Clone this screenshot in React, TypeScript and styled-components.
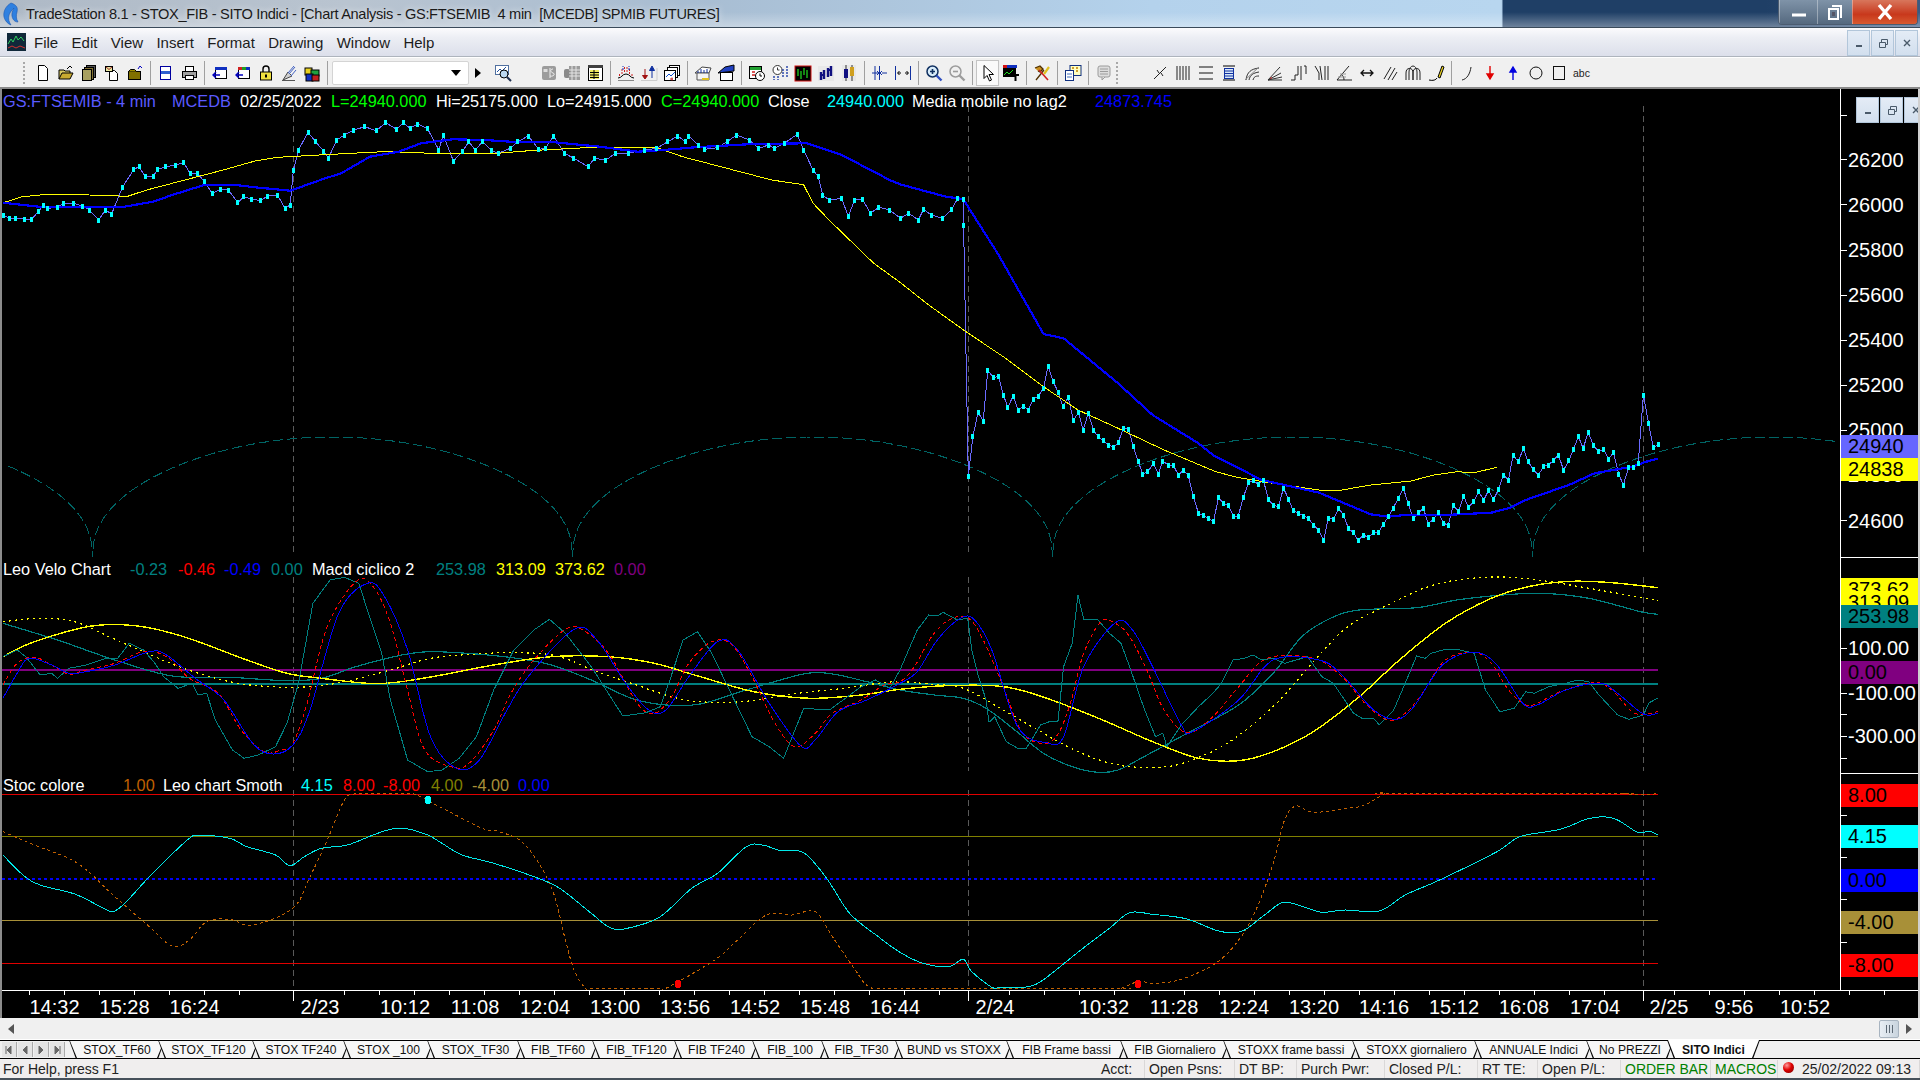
import React from 'react';
import styled, { createGlobalStyle } from 'styled-components';

type Pt = [number, number];

const GlobalStyle = createGlobalStyle`
  html, body {
    margin: 0;
    padding: 0;
    overflow: hidden;
    background: #000;
    font-family: 'Liberation Sans', Arial, sans-serif;
  }
  * { box-sizing: border-box; }
`;

/* ---- traced chart data, page coordinates ---- */

const left = (p: Pt[], base: number): Pt[] => p.map(([x, y]) => [x / 1.742, base + y / 3]);
const right = (p: Pt[], base: number): Pt[] => p.map(([x, y]) => [900 + x / 1.742, base + y / 3]);
const mainLeft = (p: Pt[]): Pt[] => p.map(([x, y]) => [x / 1.568, 100 + y / 3]);
const join = (a: Pt[], b: Pt[]): Pt[] => [...a.filter(([x]) => x < b[0][0]), ...b];

const poly = (p: Pt[]) => p.map(([x, y]) => `${x.toFixed(1)},${y.toFixed(1)}`).join(' ');

// catmull-rom, for the averaged lines
const smooth = (p: Pt[]) => {
  let d = `M${p[0][0].toFixed(1)} ${p[0][1].toFixed(1)}`;
  for (let i = 0; i < p.length - 1; i++) {
    const a = p[Math.max(i - 1, 0)];
    const b = p[i];
    const c = p[i + 1];
    const e = p[Math.min(i + 2, p.length - 1)];
    const c1x = b[0] + (c[0] - a[0]) / 6;
    const c1y = b[1] + (c[1] - a[1]) / 6;
    const c2x = c[0] - (e[0] - b[0]) / 6;
    const c2y = c[1] - (e[1] - b[1]) / 6;
    d += `C${c1x.toFixed(1)} ${c1y.toFixed(1)} ${c2x.toFixed(1)} ${c2y.toFixed(1)} ${c[0].toFixed(1)} ${c[1].toFixed(1)}`;
  }
  return d;
};

const mainYellow = join(
  mainLeft([[5,308],[35,290],[75,283],[140,285],[200,289],[230,270],[290,240],[350,210],[400,183],[435,172],[500,165],[600,155],[680,160],[780,160],[830,152],[930,142],[1030,143],[1070,170],[1150,210],[1210,240],[1260,254],[1275,310],[1300,360],[1370,490],[1440,590]]),
  right([[0,547],[50,615],[115,695],[180,770],[250,860],[310,930],[380,985],[460,1050],[550,1115],[590,1133],[650,1150],[730,1170],[770,1170],[820,1155],[890,1143],[930,1125],[970,1115],[1000,1118],[1040,1102]], 100),
);

const mainBlue = join(
  mainLeft([[5,308],[60,320],[120,322],[195,320],[240,305],[270,285],[320,255],[370,255],[400,262],[455,272],[510,235],[535,220],[580,170],[625,155],[660,130],[710,118],[760,120],[800,125],[870,127],[940,140],[1000,155],[1040,150],[1090,142],[1180,132],[1265,130],[1320,165],[1395,240],[1440,268]]),
  right([[0,253],[80,290],[110,297],[170,460],[250,702],[285,715],[380,850],[440,945],[520,1030],[545,1065],[630,1140],[730,1178],[820,1243],[850,1250],[885,1244],[960,1244],[1030,1238],[1060,1225],[1090,1200],[1165,1155],[1210,1120],[1275,1100],[1300,1085],[1320,1076]], 100),
);

const closes = join(
  mainLeft([[5,345],[15,355],[25,356],[38,357],[50,357],[60,335],[68,315],[75,325],[90,322],[100,310],[115,310],[130,318],[140,330],[155,360],[165,330],[175,342],[192,262],[210,208],[218,200],[228,230],[240,230],[247,208],[260,200],[275,195],[288,188],[298,220],[310,220],[320,245],[333,280],[345,268],[358,270],[373,308],[382,290],[395,297],[408,302],[420,288],[435,285],[447,325],[455,315],[460,210],[468,150],[483,97],[495,125],[508,155],[515,175],[528,120],[540,105],[555,90],[572,80],[590,92],[605,68],[622,88],[632,68],[643,85],[655,72],[670,85],[688,150],[695,105],[711,183],[725,155],[735,125],[745,150],[757,125],[770,150],[781,160],[800,145],[812,125],[828,108],[845,148],[855,145],[868,108],[885,160],[900,175],[922,200],[932,175],[950,180],[965,160],[985,160],[1010,150],[1030,145],[1047,125],[1063,108],[1075,125],[1080,108],[1095,135],[1105,148],[1125,143],[1140,125],[1155,105],[1175,120],[1190,145],[1205,135],[1215,145],[1230,130],[1250,103],[1260,150],[1275,210],[1283,230],[1290,285],[1300,300],[1320,295],[1330,350],[1340,300],[1352,297],[1365,340],[1378,322],[1395,330],[1412,355],[1425,340],[1440,360],[1448,328],[1460,345],[1478,355],[1492,328],[1502,295],[1510,297],[1511,375]]),
  right([[119,1128],[127,1010],[136,937],[145,963],[153,812],[163,832],[172,830],[180,885],[188,922],[197,888],[206,932],[215,918],[223,930],[232,898],[241,888],[250,865],[258,798],[267,845],[276,878],[284,920],[293,892],[302,960],[311,938],[319,990],[328,940],[337,990],[345,1010],[354,1022],[363,1035],[372,1042],[380,1028],[389,985],[398,988],[406,1038],[415,1085],[423,1122],[432,1115],[441,1090],[450,1122],[458,1083],[467,1095],[476,1095],[485,1125],[493,1112],[502,1125],[511,1190],[520,1240],[528,1245],[537,1255],[546,1265],[555,1192],[563,1210],[572,1215],[581,1250],[589,1250],[598,1192],[607,1148],[615,1142],[624,1152],[633,1142],[642,1198],[650,1215],[659,1220],[668,1165],[677,1197],[685,1232],[694,1240],[703,1248],[712,1255],[720,1275],[729,1290],[738,1320],[746,1255],[755,1258],[764,1225],[773,1245],[781,1285],[790,1298],[798,1322],[807,1305],[816,1312],[825,1298],[833,1298],[842,1272],[851,1250],[859,1225],[868,1195],[877,1165],[885,1210],[894,1255],[903,1238],[912,1225],[920,1272],[929,1258],[938,1238],[947,1270],[955,1275],[964,1215],[973,1235],[982,1188],[990,1222],[999,1205],[1008,1175],[1017,1200],[1025,1172],[1034,1198],[1043,1168],[1051,1125],[1060,1140],[1068,1065],[1077,1085],[1086,1045],[1094,1085],[1103,1108],[1112,1125],[1121,1100],[1129,1095],[1138,1082],[1147,1065],[1156,1110],[1165,1082],[1173,1048],[1182,1010],[1190,1045],[1199,997],[1208,1037],[1217,1055],[1226,1047],[1234,1078],[1243,1057],[1252,1122],[1260,1155],[1269,1103],[1278,1103],[1286,1090],[1295,885],[1304,970],[1312,1043],[1321,1033]], 100),
);

// the dashed arches, cusps every 480px
const arches: Pt[] = [];
for (let x = 8.5; x <= 1838; x += 1) {
  const s = Math.abs(Math.sin((Math.PI * (x - 92.5)) / 480));
  arches.push([x, 557 - 120 * Math.pow(s, 0.43)]);
}

const veloFast = join(
  left([[5,320],[30,300],[45,320],[70,375],[90,370],[100,385],[120,355],[150,345],[185,325],[205,325],[225,280],[250,300],[270,340],[285,380],[310,415],[335,400],[345,435],[360,430],[375,510],[405,600],[425,625],[450,615],[480,590],[500,520],[520,400],[545,160],[575,90],[600,82],[625,100],[640,180],[665,310],[680,450],[710,630],[745,665],[770,660],[800,625],[830,560],[860,420],[895,300],[930,240],[957,208],[985,250],[1030,350],[1085,498],[1125,488],[1150,470],[1165,400],[1190,270],[1215,245],[1240,310],[1265,400],[1310,560],[1340,590],[1365,625],[1400,475],[1445,480],[1500,410],[1525,390],[1550,415]], 550),
  right([[0,360],[30,240],[50,195],[65,198],[75,187],[100,210],[118,205],[125,300],[135,370],[150,450],[155,517],[165,500],[185,575],[190,580],[205,595],[220,595],[245,525],[260,515],[275,515],[285,350],[300,280],[310,135],[320,208],[345,210],[365,250],[385,280],[400,350],[425,475],[445,560],[458,550],[465,590],[490,525],[520,470],[545,430],[560,400],[580,330],[600,325],[615,315],[630,330],[650,325],[670,340],[710,320],[735,380],[755,400],[790,490],[805,505],[825,505],[835,525],[860,480],[880,400],[900,318],[915,325],[925,310],[950,298],[970,298],[1000,310],[1020,420],[1045,485],[1070,475],[1090,425],[1105,430],[1130,410],[1160,400],[1180,390],[1200,395],[1215,430],[1250,495],[1270,508],[1295,495],[1305,458],[1320,445]], 550),
);

const veloRed = join(
  left([[5,405],[30,340],[60,322],[90,345],[120,372],[150,360],[200,340],[250,305],[290,320],[330,385],[380,430],[420,540],[460,605],[490,600],[510,580],[535,460],[570,230],[620,95],[650,110],[680,220],[710,420],[740,600],[790,652],[820,635],[860,540],[890,430],[930,330],[985,238],[1015,240],[1060,310],[1110,460],[1140,490],[1170,440],[1200,340],[1240,275],[1275,285],[1310,380],[1350,520],[1385,590],[1420,550],[1450,490],[1500,450],[1540,405]], 550),
  right([[0,395],[25,350],[55,260],[85,210],[118,203],[145,270],[180,410],[210,540],[240,578],[270,565],[295,470],[320,310],[350,215],[375,220],[400,260],[430,360],[460,480],[500,548],[545,500],[590,410],[640,325],[720,325],[770,380],[810,460],[850,510],[880,490],[910,430],[950,330],[1000,307],[1030,340],[1060,420],[1090,465],[1110,460],[1150,425],[1210,398],[1240,420],[1280,490],[1320,485]], 550),
);

const veloBlue = join(
  left([[5,445],[30,370],[50,325],[90,345],[120,370],[150,365],[200,345],[260,305],[290,315],[340,385],[390,450],[440,580],[475,612],[510,585],[540,480],[590,190],[640,100],[670,140],[710,300],[750,560],[795,655],[835,630],[880,490],[920,380],[1000,238],[1040,270],[1090,400],[1130,480],[1160,480],[1200,380],[1250,275],[1285,300],[1340,460],[1395,588],[1420,570],[1460,485],[1510,450]], 550),
  right([[0,400],[30,365],[65,270],[105,205],[130,210],[160,300],[205,530],[255,578],[285,560],[320,350],[375,218],[405,240],[440,350],[490,525],[510,545],[590,450],[650,330],[730,330],[770,375],[825,480],[865,508],[895,470],[945,345],[1000,307],[1040,345],[1085,460],[1110,465],[1160,420],[1220,400],[1250,430],[1295,492],[1320,490]], 550),
);

const macdTeal = join(
  left([[5,220],[100,270],[200,330],[300,378],[400,382],[500,392],[560,385],[620,350],[700,315],[750,305],[830,312],[900,325],[960,345],[1030,390],[1100,445],[1160,465],[1220,462],[1300,420],[1400,372],[1450,372],[1510,395]], 550),
  right([[0,420],[60,435],[110,445],[150,475],[200,540],[250,610],[300,650],[345,667],[380,660],[420,625],[500,550],[590,465],[650,370],[700,260],[750,205],[800,180],[900,173],[970,150],[1050,135],[1120,130],[1200,145],[1290,185],[1320,193]], 550),
);

const macdYellow = join(
  left([[5,320],[60,275],[160,228],[240,228],[320,260],[430,330],[500,370],[560,385],[640,400],[690,397],[760,378],[860,345],[960,320],[1060,320],[1140,340],[1210,375],[1300,420],[1360,438],[1420,445],[1500,435]], 550),
  right([[0,418],[80,407],[170,408],[220,425],[280,460],[360,515],[440,575],[520,625],[590,632],[650,605],[720,545],[800,440],[870,330],[950,220],[1030,145],[1100,108],[1170,94],[1240,98],[1320,113]], 550),
);

const macdDotted = join(
  left([[5,215],[70,205],[130,215],[190,260],[250,305],[320,355],[400,395],[470,410],[540,410],[600,395],[680,360],[750,325],[830,312],[900,308],[970,318],[1040,365],[1100,400],[1180,445],[1240,457],[1310,452],[1390,430],[1470,415],[1530,400]], 550),
  right([[0,395],[50,402],[110,415],[170,470],[240,540],[310,605],[380,645],[450,652],[500,635],[570,580],[650,470],[720,335],[780,230],[850,165],[920,110],[980,88],[1050,81],[1120,92],[1190,112],[1250,130],[1320,152]], 550),
);

const smothCyan = join(
  left([[5,255],[40,315],[70,345],[130,372],[175,410],[197,425],[220,395],[260,320],[295,260],[330,205],[345,196],[400,205],[430,230],[480,255],[505,287],[530,260],[560,235],[605,225],[650,195],[680,178],[705,175],[745,195],[770,220],[805,255],[860,280],[930,320],[975,355],[1030,430],[1065,475],[1100,472],[1150,440],[1205,355],[1250,310],[1300,230],[1330,226],[1360,242],[1400,248],[1440,325],[1480,430],[1530,500]], 770),
  right([[0,547],[40,580],[85,590],[110,568],[125,605],[160,652],[175,652],[200,652],[215,652],[245,635],[315,540],[365,475],[400,428],[440,433],[500,447],[555,483],[595,484],[635,435],[668,397],[705,412],[735,427],[775,420],[835,423],[880,375],[940,330],[1040,245],[1080,200],[1150,178],[1195,148],[1225,140],[1250,150],[1285,187],[1305,184],[1320,194]], 770),
);

const stocOrange = join(
  left([[5,185],[60,225],[135,280],[200,380],[260,470],[300,528],[330,510],[360,455],[400,448],[440,465],[510,415],[540,320],[570,210],[600,90],[620,71],[635,71],[705,71],[720,71],[760,105],[840,175],[870,185],[915,225],[960,350],[985,510],[1000,600],[1020,655],[1035,655],[1145,655],[1160,655],[1245,570],[1285,510],[1335,435],[1380,435],[1420,425],[1450,500],[1490,600],[1515,650]], 770),
  right([[0,655],[370,655],[385,655],[415,635],[445,640],[490,628],[550,580],[590,510],[620,420],[650,280],[670,150],[690,108],[720,127],[780,115],[810,105],[845,71],[860,71],[1245,71],[1260,71],[1290,75],[1320,71]], 770),
);

const dayLines = [293, 968, 1643];

const timeLabels: [string, number][] = [
  ['14:32', 54.5], ['15:28', 124.6], ['16:24', 194.6], ['2/23', 320], ['10:12', 405], ['11:08', 475],
  ['12:04', 545], ['13:00', 615], ['13:56', 685], ['14:52', 755], ['15:48', 825], ['16:44', 895],
  ['2/24', 995], ['10:32', 1104], ['11:28', 1174], ['12:24', 1244], ['13:20', 1314], ['14:16', 1384],
  ['15:12', 1454], ['16:08', 1524], ['17:04', 1595], ['2/25', 1669], ['9:56', 1734], ['10:52', 1805],
];

const timeTicks: number[] = [];
for (let x = 28.7; x < 1920; x += 35) {
  if (!dayLines.some((d) => Math.abs(d - x) < 20)) timeTicks.push(x);
}

type AxisLabel = { text: string; y: number; bg?: string };

const mainAxis: AxisLabel[] = [
  { text: '26200', y: 160 }, { text: '26000', y: 205 }, { text: '25800', y: 250.5 }, { text: '25600', y: 295.5 },
  { text: '25400', y: 340.5 }, { text: '25200', y: 385.5 }, { text: '25000', y: 430.5 }, { text: '24800', y: 475.5 },
  { text: '24600', y: 521 }, { text: '24940', y: 446.5, bg: '#6666ff' }, { text: '24838', y: 469.5, bg: '#ffff00' },
];
const veloAxis: AxisLabel[] = [
  { text: '100.00', y: 648.5 }, { text: '-100.00', y: 693.5 }, { text: '-300.00', y: 736.5 },
  { text: '373.62', y: 589.5, bg: '#ffff00' }, { text: '313.09', y: 602, bg: '#ffff00' },
  { text: '253.98', y: 616.5, bg: '#008080' }, { text: '0.00', y: 672.5, bg: '#800080' },
];
const stocAxis: AxisLabel[] = [
  { text: '8.00', y: 795.5, bg: '#ff0000' }, { text: '4.15', y: 836.5, bg: '#00ffff' }, { text: '0.00', y: 880.5, bg: '#0000ff' },
  { text: '-4.00', y: 922.5, bg: '#a89038' }, { text: '-8.00', y: 965.5, bg: '#ff0000' },
];

type LegendEntry = { text: string; color: string; x: number };

const mainLegend: LegendEntry[] = [
  { text: 'GS:FTSEMIB - 4 min', color: '#5a5aff', x: 3 }, { text: 'MCEDB', color: '#5a5aff', x: 172 },
  { text: '02/25/2022', color: '#fff', x: 240 }, { text: 'L=24940.000', color: '#00ff00', x: 331 },
  { text: 'Hi=25175.000', color: '#fff', x: 436 }, { text: 'Lo=24915.000', color: '#fff', x: 547 },
  { text: 'C=24940.000', color: '#00ff00', x: 661 }, { text: 'Close', color: '#fff', x: 768 },
  { text: '24940.000', color: '#00ffff', x: 827 }, { text: 'Media mobile no lag2', color: '#fff', x: 912 },
  { text: '24873.745', color: '#0000ff', x: 1095 },
];
const veloLegend: LegendEntry[] = [
  { text: 'Leo Velo Chart', color: '#fff', x: 3 }, { text: '-0.23', color: '#008080', x: 130 },
  { text: '-0.46', color: '#ff0000', x: 178 }, { text: '-0.49', color: '#0000ff', x: 224 },
  { text: '0.00', color: '#008080', x: 271 }, { text: 'Macd ciclico 2', color: '#fff', x: 312 },
  { text: '253.98', color: '#008080', x: 436 }, { text: '313.09', color: '#ffff00', x: 496 },
  { text: '373.62', color: '#ffff00', x: 555 }, { text: '0.00', color: '#800080', x: 614 },
];
const stocLegend: LegendEntry[] = [
  { text: 'Stoc colore', color: '#fff', x: 3 }, { text: '1.00', color: '#c06000', x: 123 },
  { text: 'Leo chart Smoth', color: '#fff', x: 163 }, { text: '4.15', color: '#00ffff', x: 301 },
  { text: '8.00', color: '#ff0000', x: 343 }, { text: '-8.00', color: '#ff0000', x: 383 },
  { text: '4.00', color: '#808000', x: 431 }, { text: '-4.00', color: '#a89038', x: 472 },
  { text: '0.00', color: '#0000ff', x: 518 },
];

const tabs: [string, number][] = [
  ['STOX_TF60', 89], ['STOX_TF120', 94], ['STOX TF240', 91], ['STOX _100', 84], ['STOX_TF30', 90],
  ['FIB_TF60', 75], ['FIB_TF120', 82], ['FIB TF240', 78], ['FIB_100', 69], ['FIB_TF30', 74],
  ['BUND vs STOXX', 111], ['FIB Frame bassi', 114], ['FIB Giornaliero', 103], ['STOXX frame bassi', 129],
  ['STOXX giornaliero', 122], ['ANNUALE Indici', 112], ['No PREZZI', 81], ['SITO Indici', 86],
];

const statusCells: [string, number, string?][] = [
  ['Acct:', 48], ['Open Psns:', 90], ['DT BP:', 62], ['Purch Pwr:', 88], ['Closed P/L:', 93],
  ['RT TE:', 60], ['Open P/L:', 83], ['ORDER BAR', 90, '#008000'], ['MACROS', 67, '#008000'],
];

/* ---- layout ---- */

const Page = styled.div`
  width: 1920px;
  height: 1080px;
  display: flex;
  flex-direction: column;
  overflow: hidden;
  background: #f0f0f0;
`;

const TitleBar = styled.header`
  height: 28px;
  display: flex;
  align-items: center;
  padding-left: 2px;
  border-bottom: 1px solid #3a4a5a;
  background:
    linear-gradient(180deg, rgba(255, 255, 255, 0) 45%, rgba(255, 255, 255, 0.35) 100%),
    linear-gradient(90deg, #aeb9c6 0%, #b9c4d0 18%, #a8bdd2 36%, #b4d2ec 60%, #b8d6ef 78%, #b8d6ef 78.2%, #1f3f66 78.3%, #1f3f66 92%, #3a5a84 100%);
`;

const AppIcon = styled.svg`
  flex: none;
`;

const TitleText = styled.span`
  margin-left: 6px;
  font-size: 14.6px;
  letter-spacing: -0.32px;
  color: #1a1a1a;
  white-space: pre;
  text-shadow: 0 0 6px rgba(255, 255, 255, 0.8);
`;

const WinButtons = styled.div`
  margin-left: auto;
  margin-right: 2px;
  height: 25px;
  align-self: flex-start;
  display: flex;
  border: 1px solid #4c5c70;
  border-top: none;
  border-radius: 0 0 4px 4px;
  overflow: hidden;
`;

const WinButton = styled.div<{ $w: number; $bg: string }>`
  width: ${(p) => p.$w}px;
  display: flex;
  align-items: center;
  justify-content: center;
  background: ${(p) => p.$bg};
  border-left: 1px solid rgba(255, 255, 255, 0.35);
`;

const MenuBar = styled.nav`
  height: 29px;
  display: flex;
  align-items: center;
  padding-left: 7px;
  border-bottom: 1px solid #aeb4bd;
  background: linear-gradient(180deg, #fbfbfd 0%, #eceef4 35%, #dcdfeb 100%);
`;

const MenuLogo = styled.svg`
  flex: none;
  margin-right: 8px;
`;

const MenuItem = styled.span`
  font-size: 15px;
  color: #1c1c1c;
  margin-right: 13.4px;
`;

const MdiButtons = styled.div<{ $floating?: boolean }>`
  display: flex;
  gap: 1px;
  margin-left: auto;
  margin-right: 2px;
  align-self: flex-end;
  ${(p) => p.$floating && 'position: absolute; top: 8px; right: 0; margin: 0; z-index: 3; overflow: hidden; width: 62px;'}
`;

const MdiButton = styled.div`
  width: 23px;
  height: 26px;
  flex: none;
  display: flex;
  align-items: center;
  justify-content: center;
  background: linear-gradient(180deg, #e4ecf6, #d2dfee);
  border: 1px solid #b2c6da;
`;

const Toolbar = styled.div`
  height: 32px;
  display: flex;
  align-items: center;
  padding-left: 22px;
  background: #f0f0f0;
  border-top: 1px solid #fff;
  border-bottom: 2px solid #8a8a8a;
`;

const Grip = styled.div<{ $w: number }>`
  width: ${(p) => p.$w}px;
  height: 24px;
  flex: none;
  background-image: radial-gradient(#a8a8a8 1px, transparent 1.2px);
  background-size: 4px 4px;
  background-repeat: repeat-y;
  background-position: 0 0;
`;

const ToolButton = styled.div<{ $pressed?: boolean }>`
  width: 23px;
  height: 26px;
  flex: none;
  display: flex;
  align-items: center;
  justify-content: center;
  ${(p) => p.$pressed && 'background: #fafafa; border: 1px solid #c4c4c4;'}
`;

const ToolSep = styled.div`
  width: 8px;
  height: 24px;
  flex: none;
  position: relative;
  display: flex;
  justify-content: center;
  &::before {
    content: '';
    width: 1px;
    background: #a0a0a0;
  }
`;

const Combo = styled.div`
  width: 137px;
  height: 24px;
  margin-left: 1px;
  flex: none;
  display: flex;
  align-items: center;
  justify-content: flex-end;
  padding-right: 7px;
  background: #fff;
  border: 1px solid #d4d4d4;
  border-radius: 2px;
`;

const ComboGap = styled.div<{ $w: number }>`
  width: ${(p) => p.$w}px;
  flex: none;
  display: flex;
  justify-content: center;
`;

const Chart = styled.section`
  height: 929px;
  display: flex;
  flex-direction: column;
  background: #000;
  border-left: 2px solid #8c8c8c;
  border-right: 2px solid #d0d0d0;
`;

const Pane = styled.div<{ $h: number }>`
  height: ${(p) => p.$h}px;
  display: flex;
  position: relative;
`;

const Plot = styled.div`
  flex: 1;
  position: relative;
  overflow: hidden;
`;

const PlotSvg = styled.svg`
  display: block;
`;

const PriceAxis = styled.div<{ $sep?: boolean }>`
  width: 78px;
  flex: none;
  position: relative;
  overflow: hidden;
  border-left: 1px solid #fff;
  ${(p) => p.$sep && 'border-bottom: 1px solid #fff;'}
`;

const PriceLabel = styled.span<{ $y: number; $bg?: string }>`
  position: absolute;
  left: 0;
  right: 0;
  top: ${(p) => p.$y - 11.5}px;
  height: 23px;
  line-height: 23px;
  padding-left: 7px;
  font-size: 20px;
  white-space: pre;
  color: ${(p) => (p.$bg ? '#000' : '#fff')};
  background: ${(p) => p.$bg ?? 'transparent'};
`;

const PriceTick = styled.i<{ $y: number }>`
  position: absolute;
  left: 0;
  top: ${(p) => p.$y}px;
  width: 6px;
  height: 1px;
  background: #fff;
`;

const LegendRow = styled.div<{ $top: number }>`
  position: absolute;
  left: 0;
  right: 0;
  top: ${(p) => p.$top}px;
  height: 20px;
  z-index: 2;
`;

const LegendItem = styled.span<{ $x: number; $color: string }>`
  position: absolute;
  left: ${(p) => p.$x}px;
  top: 0;
  font-size: 16.3px;
  line-height: 20px;
  white-space: pre;
  color: ${(p) => p.$color};
`;

const TimeAxis = styled.div`
  height: 28px;
  position: relative;
  overflow: hidden;
  border-top: 1px solid #fff;
`;

const TimeLabel = styled.span<{ $x: number }>`
  position: absolute;
  left: ${(p) => p.$x - 2}px;
  top: 4px;
  transform: translateX(-50%);
  font-size: 20px;
  line-height: 24px;
  color: #fff;
`;

const TimeTick = styled.i<{ $x: number; $long?: boolean }>`
  position: absolute;
  left: ${(p) => p.$x - 2}px;
  top: 0;
  width: 1px;
  height: ${(p) => (p.$long ? 10 : 4)}px;
  background: #fff;
`;

const HScroll = styled.div`
  height: 22px;
  display: flex;
  align-items: center;
  padding: 0 8px;
  background: #f0f0f0;
  border-bottom: 1px solid #fff;
`;

const ScrollThumb = styled.div`
  width: 20px;
  height: 18px;
  margin-left: auto;
  margin-right: 7px;
  display: flex;
  align-items: center;
  justify-content: center;
  gap: 1px;
  background: linear-gradient(90deg, #e8eef4, #c9d4de);
  border: 1px solid #a8b4c0;
  border-radius: 2px;
  &::before {
    content: '';
    width: 7px;
    height: 8px;
    background: repeating-linear-gradient(90deg, #5c6874 0 1px, transparent 1px 3px);
  }
`;

const TabBar = styled.div`
  height: 19px;
  display: flex;
  background: #f0f0f0;
  border-top: 1px solid #000;
  border-bottom: 1px solid #000;
`;

const TabNav = styled.div`
  width: 69px;
  flex: none;
  display: flex;
  padding: 1px 0 0 2px;
  gap: 1px;
`;

const TabNavButton = styled.div`
  width: 15px;
  height: 15px;
  display: flex;
  align-items: center;
  justify-content: center;
  background: #e4e4e4;
  border-right: 1px solid #aaa;
`;

const Tab = styled.div<{ $w: number; $active?: boolean }>`
  width: ${(p) => p.$w + 7}px;
  margin-right: -7px;
  margin-top: -1px;
  margin-bottom: -1px;
  flex: none;
  position: relative;
  display: flex;
  align-items: center;
  justify-content: center;
  font-size: 12.1px;
  font-weight: ${(p) => (p.$active ? 700 : 400)};
  color: #111;
  white-space: nowrap;
  background: #000;
  clip-path: polygon(0 0, 100% 0, calc(100% - 7px) 100%, 7px 100%);
  z-index: ${(p) => (p.$active ? 2 : 1)};
  &::before {
    content: '';
    position: absolute;
    inset: ${(p) => (p.$active ? '0 1px 1px 1px' : '1px')};
    background: ${(p) => (p.$active ? '#fff' : '#f7f7f7')};
    clip-path: polygon(0 0, 100% 0, calc(100% - 7px) 100%, 7px 100%);
  }
`;

const TabLabel = styled.span`
  position: relative;
`;

const StatusBar = styled.footer`
  height: 21px;
  display: flex;
  align-items: center;
  padding-top: 1px;
  background: #f0eeee;
  border-bottom: 2px solid #46505a;
  font-size: 14px;
  color: #222;
`;

const StatusHelp = styled.span`
  padding-left: 3px;
  margin-right: auto;
`;

const StatusCell = styled.span<{ $w?: number; $color?: string }>`
  width: ${(p) => (p.$w ? `${p.$w}px` : 'auto')};
  height: 100%;
  display: flex;
  align-items: center;
  flex: none;
  padding-left: 4px;
  white-space: nowrap;
  color: ${(p) => p.$color ?? '#222'};
  border-right: 1px solid #dad8d8;
`;

const StatusDot = styled.i`
  width: 11px;
  height: 11px;
  margin: 0 4px 3px 5px;
  flex: none;
  border-radius: 50%;
  background: radial-gradient(circle at 35% 30%, #ff9a9a, #e00000 45%, #700000);
`;

/* ---- toolbar drawings ---- */

const G = '#9c9c9c';
const icons: Record<string, React.ReactNode> = {
  doc: <path d="M4.5 1.5h6l3 3v12h-9z" fill="#fff" stroke="#000" />,
  open: <><path d="M2 15V6h5l1 1h5v2" fill="#d8c860" stroke="#000" /><path d="M2 15l3-6h11l-3 6z" fill="#c8aa30" stroke="#000" /><path d="M10 5l3-3 2 2" fill="none" stroke="#000" /></>,
  copies: <><rect x="6.5" y="1.5" width="9" height="12" fill="#555" stroke="#000" /><rect x="4.5" y="3.5" width="9" height="12" fill="#806f30" stroke="#000" /><rect x="2.5" y="5.5" width="9" height="11" fill="#a8a060" stroke="#000" /></>,
  paste: <><path d="M6.5 6.5h5l3 3v7h-8z" fill="#fff" stroke="#000" /><rect x="2.5" y="2.5" width="7" height="5" fill="#e8e8a0" stroke="#000" /><path d="M3 3l3 2.5L9 3" fill="none" stroke="#a03030" /></>,
  chest: <><rect x="2.5" y="7.5" width="12" height="8" fill="#807000" stroke="#000" /><path d="M2.5 7.5l2-2h4l2 2" fill="#a09000" stroke="#000" /><path d="M12 5l2-3 2 2" fill="none" stroke="#0000c0" /></>,
  preview: <><rect x="3.5" y="2.5" width="10" height="13" fill="#fff" stroke="#0000a0" /><rect x="4" y="7" width="9" height="3" fill="#3060d0" /></>,
  printer: <><rect x="5.5" y="2.5" width="8" height="5" fill="#fff" stroke="#000" /><rect x="2.5" y="7.5" width="14" height="6" fill="#a0a0a0" stroke="#000" /><rect x="5.5" y="11.5" width="8" height="4" fill="#fff" stroke="#000" /></>,
  win1: <><rect x="4.5" y="3.5" width="11" height="11" fill="#fff" stroke="#000" /><rect x="4" y="3" width="12" height="3" fill="#1030c0" /><path d="M9 11H2m3-3l-3 3 3 3" fill="none" stroke="#0000c0" strokeWidth="1.4" /></>,
  win2: <><rect x="4.5" y="3.5" width="11" height="11" fill="#fff" stroke="#000" /><rect x="4" y="3" width="4" height="3" fill="#d02020" /><rect x="8" y="3" width="4" height="3" fill="#20a020" /><rect x="12" y="3" width="4" height="3" fill="#1030c0" /><path d="M9 11H2m3-3l-3 3 3 3" fill="none" stroke="#0000c0" strokeWidth="1.4" /></>,
  lock: <><path d="M6 8V5a3 3 0 016 0v3" fill="none" stroke="#000" strokeWidth="1.4" /><rect x="3.5" y="8" width="11" height="8" fill="#f0e040" stroke="#000" /><rect x="8" y="10.5" width="2" height="3" fill="#000" /></>,
  sat: <><path d="M3 16l5-8 4 4z" fill="#d0d0d0" stroke="#444" /><path d="M8 9l6-7M9 10l6-7M11 12l5-6" stroke="#4060c0" fill="none" /><path d="M2 16.5h13" stroke="#555" /></>,
  cubes: <><rect x="2" y="4" width="7" height="7" fill="#e8d020" stroke="#000" /><rect x="8" y="6" width="8" height="6" fill="#20a040" stroke="#000" /><rect x="3" y="10" width="7" height="7" fill="#1030c0" stroke="#000" /><rect x="9" y="11" width="7" height="6" fill="#c02020" stroke="#000" /></>,
  chartFind: <><rect x="1.5" y="1.5" width="13" height="9" fill="#fff" stroke="#5070a0" /><path d="M3 8l3-3 2 2 4-4" fill="none" stroke="#2050a0" /><circle cx="10" cy="10" r="4" fill="#bcd8f0" stroke="#000" /><path d="M13 13l4 4" stroke="#203050" strokeWidth="2" /></>,
  calcG: <><rect x="2" y="2" width="14" height="14" rx="2" fill={G} /><path d="M10 4v10M13 5c-3 0-3 3 0 4s0 4-3 3" stroke="#eee" fill="none" /><rect x="3.5" y="5" width="4" height="3" fill="#ddd" /></>,
  tableG: <><rect x="6" y="2" width="11" height="14" fill={G} /><rect x="1" y="5" width="6" height="9" rx="2" fill="#8a8a8a" /><path d="M6 6h11M6 9h11M6 12h11M9 2v14M13 2v14" stroke="#e4e4e4" /></>,
  table: <><rect x="2.5" y="1.5" width="14" height="15" fill="#fff" stroke="#000" /><rect x="2" y="1" width="15" height="3" fill="#404040" /><rect x="4" y="6" width="9" height="9" fill="#f0e860" /><path d="M4 8.5h9M4 11h9M4 13.5h9M8 6v9" stroke="#000" /></>,
  hist: <><path d="M1 14c4 0 4-4 8-4s4 4 8 4" fill="none" stroke="#000" /><path d="M2.5 12V9M5 10V4M7.5 8V2M10 8V2M12.5 10V4M15 12V9" stroke="#d02020" strokeDasharray="2 1" /><path d="M6 6V2M12 6V2" stroke="#1030c0" strokeDasharray="2 1" /><path d="M1 16.5h16" stroke="#888" /></>,
  arrows: <><path d="M5 5v9M2.5 11.5L5 15l2.5-3.5z" stroke="#a01010" fill="#a01010" /><path d="M12 14V4M9.5 6.5L12 2l2.5 4.5z" stroke="#1030a0" fill="#1030a0" /><path d="M1 16.5h16V4" stroke="#ccc" fill="none" /></>,
  stack: <><rect x="6.5" y="1.5" width="10" height="10" fill="#fff" stroke="#000" /><rect x="4.5" y="3.5" width="10" height="10" fill="#fff" stroke="#000" /><rect x="1.5" y="6.5" width="11" height="10" fill="#fff" stroke="#000" /><path d="M3 13l3-3 2 2 4-4" stroke="#1050d0" fill="none" /><path d="M7 15h3M9 13.5v3" stroke="#c02020" /></>,
  roof1: <><path d="M1 9l7-6 9 1-2 5z" fill="#fff" stroke="#444" /><path d="M3 9h12v7H3z" fill="#f4f4f4" stroke="#555" /><path d="M4 7v2M7 5v4M10 6v3M13 5v4" stroke="#1030a0" /><path d="M8 15h7" stroke="#e0c020" strokeWidth="2" /></>,
  roof2: <><path d="M1 9l7-6 9-2v6z" fill="#2040c0" stroke="#000" /><rect x="3.5" y="8.5" width="12" height="8" fill="#fff" stroke="#000" /></>,
  calClock: <><rect x="1.5" y="2.5" width="12" height="12" fill="#fff" stroke="#000" /><rect x="2" y="3" width="11" height="3" fill="#20a030" /><path d="M4 8h3M4 11h3" stroke="#d02020" strokeWidth="1.5" /><circle cx="12" cy="12" r="4.5" fill="#fff" stroke="#000" /><path d="M12 9.5V12h2" stroke="#000" fill="none" /></>,
  clockBars: <><circle cx="6.5" cy="6" r="4.5" fill="#fff" stroke="#333" /><path d="M6.5 3.5V6h2" stroke="#333" fill="none" /><path d="M3 12v4M7 12v4M12 5v9M16 2v12" stroke="#1030a0" strokeDasharray="2 1" strokeWidth="1.3" /></>,
  blackChart: <><rect x="1" y="2" width="16" height="15" fill="#000" stroke="#d01010" /><path d="M4 5v7M7 7v8M10 4v7M13 6v8" stroke="#20e020" strokeWidth="1.2" /></>,
  bars: <><rect x="1" y="2" width="16" height="15" fill="#e8e8e8" /><path d="M4 8v8M7 6v9M11 4v9M14 2v10" stroke="#101080" strokeWidth="2.4" /><path d="M4 11h3M11 6h3" stroke="#101080" strokeWidth="2" /></>,
  candles: <><rect x="2" y="1" width="14" height="16" fill="#e8e8e8" /><path d="M6 1v16M12 1v16" stroke="#333" /><rect x="4" y="5" width="4" height="9" fill="#101080" /><rect x="10" y="3" width="4" height="9" fill="#d0a020" /></>,
  inA: <path d="M8.5 2v14M4 2v14M1 9h6M6 7l2 2-2 2M16 9h-5M11 7l-2 2 2 2" stroke="#1030a0" fill="none" />,
  inB: <><path d="M1.5 2v14M16.5 2v14" stroke="#1030a0" /><path d="M4 9h3M3.5 9l2-2M3.5 9l2 2M14 9h-3M14.5 9l-2-2M14.5 9l-2 2" stroke="#000" fill="none" /></>,
  zoomIn: <><circle cx="7.5" cy="7.5" r="5.5" fill="#d8ecfa" stroke="#103060" strokeWidth="1.5" /><path d="M5 7.5h5M7.5 5v5" stroke="#103060" strokeWidth="1.6" /><path d="M11.5 11.5l5 5" stroke="#3050c0" strokeWidth="2.4" /></>,
  zoomOut: <><circle cx="7.5" cy="7.5" r="5.5" fill="#f0f0f0" stroke={G} strokeWidth="1.5" /><path d="M5 7.5h5" stroke={G} strokeWidth="1.6" /><path d="M11.5 11.5l5 5" stroke={G} strokeWidth="2.4" /></>,
  pointer: <path d="M5 1.5v13l3-3 2.5 5.5 2-1-2.5-5.5h4.5z" fill="#fff" stroke="#000" />,
  chartT: <><rect x="1" y="1" width="14" height="3" fill="#1030c0" /><rect x="1" y="1" width="4" height="3" fill="#d01010" /><rect x="1" y="4" width="13" height="9" fill="#000" /><path d="M2 11l3-3 2 2 4-4" stroke="#20e020" fill="none" /><path d="M10 10h7v2h-2.5v5h-2v-5H10z" fill="#000" /></>,
  tools: <><path d="M3 16l8-10M2 4l5-2 3 3-3 3-2-1" stroke="#503000" fill="#c89020" strokeWidth="1.3" /><path d="M15 16L6 6" stroke="#d02020" strokeWidth="1.6" /><path d="M16 3l-5 7" stroke="#e0c020" strokeWidth="2.2" /></>,
  dial: <><rect x="6" y="1.5" width="11" height="10" fill="#ffffc0" stroke="#103080" /><path d="M8 4h2M12 4h2M8 7h2M12 7h2" stroke="#c08000" strokeWidth="1.4" /><rect x="1.5" y="6.5" width="8" height="10" fill="#fff" stroke="#103080" /><path d="M3 10h5M3 13h5" stroke="#4070c0" /></>,
  noteG: <><rect x="3" y="2" width="12" height="11" rx="2" fill="#ddd" stroke={G} /><path d="M5 5h8M5 7.5h8M5 10h8" stroke={G} /><path d="M7 13v3l3-3" fill="#ddd" stroke={G} /></>,
  trend: <path d="M3 15L15 3M6 6l2 3M10 9l2 3" stroke="#222" fill="none" />,
  vlines: <path d="M3 2v14M6 2v14M9 2v14M12 2v14M15 2v14" stroke="#222" />,
  hlines: <path d="M2 3h14M2 9h14M2 15h14" stroke="#111" strokeWidth="1.2" />,
  fib: <><path d="M3 2h12M3 16h12" stroke="#000" /><rect x="4.5" y="4.5" width="9" height="10" fill="#d8e8f8" stroke="#1030a0" /><path d="M5 7h8M5 9.5h8M5 12h8" stroke="#1030a0" /></>,
  arcsD: <><path d="M3 16C4 8 8 5 16 4M6 16c1-5 4-7 10-8M10 16c1-3 2-4 6-4" fill="none" stroke="#333" /><path d="M2 16L16 3" stroke="#888" /></>,
  fan: <><path d="M2 16h14M2 16L14 3M2 16l13-7M2 16l14-3" stroke="#333" /><path d="M4 14h2" stroke="#d02020" /></>,
  steps: <path d="M2 16h4v-5h3V2M12 2v14M15 2h2v8" fill="none" stroke="#222" />,
  fork: <path d="M3 2l4 7v7M8 2l2 14M13 2v14M16 2v14" fill="none" stroke="#222" />,
  angle: <><path d="M2 16h15M2 16L14 2" stroke="#222" /><path d="M9 16c0-3-1-4-2-5" fill="none" stroke="#222" /><path d="M3 13h8M5 10h6" stroke="#999" /></>,
  width: <path d="M3 9h12M6 6L3 9l3 3M12 6l3 3-3 3" fill="none" stroke="#111" strokeWidth="1.3" />,
  channel: <path d="M3 15L10 3M7 16L14 4M11 16l5-8" fill="none" stroke="#222" />,
  cycle: <path d="M2 16V9a3.5 4.5 0 017 0v7M9 16V9a3.5 4.5 0 017 0v7M5 16V8a4 6 0 018 0v8" fill="none" stroke="#222" />,
  pen: <><path d="M2 16c4 1 7 0 8-2" fill="none" stroke="#000" /><path d="M11 13l4-11 2 1-4 11z" fill="#e8d020" stroke="#000" /></>,
  curve: <path d="M4 16c5-1 8-6 9-13" fill="none" stroke="#222" />,
  down: <path d="M9 2v8M6 10h6l-3 5z" fill="#e00000" stroke="#e00000" strokeWidth="1.4" />,
  up: <path d="M9 16V8M6 8h6L9 3z" fill="#0000e0" stroke="#0000e0" strokeWidth="1.4" />,
  circle: <circle cx="9" cy="9" r="6" fill="none" stroke="#111" />,
  square: <rect x="3.5" y="2.5" width="11" height="13" fill="none" stroke="#111" />,
};

const Tool = ({ name, pressed }: { name: string; pressed?: boolean }) => (
  <ToolButton $pressed={pressed}>
    <svg width="18" height="18" viewBox="0 0 18 18">{icons[name]}</svg>
  </ToolButton>
);

const AbcLabel = styled.span`
  font-size: 10.5px;
  color: #222;
`;

const toolGroups = [
  ['doc', 'open', 'copies', 'paste', 'chest'],
  ['preview', 'printer'],
  ['win1', 'win2', 'lock', 'sat', 'cubes'],
];
const toolGroupsB = [
  ['calcG', 'tableG', 'table'],
  ['hist', 'arrows', 'stack'],
  ['roof1', 'roof2'],
  ['calClock', 'clockBars', 'blackChart', 'bars', 'candles'],
  ['inA', 'inB'],
  ['zoomIn', 'zoomOut'],
];
const drawingTools = ['trend', 'vlines', 'hlines', 'fib', 'arcsD', 'fan', 'steps', 'fork', 'angle', 'width', 'channel', 'cycle', 'pen'];

const ToolGroup = ({ names }: { names: string[] }) => (
  <>
    {names.map((n) => (
      <Tool key={n} name={n} />
    ))}
    <ToolSep />
  </>
);

/* ---- chart bits ---- */

const Line = ({ d, color, w = 1, dash }: { d: string; color: string; w?: number; dash?: string }) => (
  <path d={d} fill="none" stroke={color} strokeWidth={w} strokeDasharray={dash} />
);

const HLine = ({ y, color, w = 1, dash }: { y: number; color: string; w?: number; dash?: string }) => (
  <line x1={2} x2={1658} y1={y} y2={y} stroke={color} strokeWidth={w} strokeDasharray={dash} />
);

const DayLines = ({ from, to }: { from: number; to: number }) => (
  <>
    {dayLines.map((x) => (
      <line key={x} x1={x} x2={x} y1={from} y2={to} stroke="#5a5a5a" strokeDasharray="6 4" />
    ))}
  </>
);

const Legend = ({ items, top }: { items: LegendEntry[]; top: number }) => (
  <LegendRow $top={top}>
    {items.map((it) => (
      <LegendItem key={it.text + it.x} $x={it.x - 2} $color={it.color}>
        {it.text}
      </LegendItem>
    ))}
  </LegendRow>
);

const Axis = ({ labels, top, ticks, sep }: { labels: AxisLabel[]; top: number; ticks: number[]; sep?: boolean }) => (
  <PriceAxis $sep={sep}>
    {ticks.map((y) => (
      <PriceTick key={y} $y={y - top} />
    ))}
    {labels.map((l) => (
      <PriceLabel key={l.text + l.y} $y={l.y - top} $bg={l.bg}>
        {l.text}
      </PriceLabel>
    ))}
  </PriceAxis>
);

const Plane = ({ top, h, children }: { top: number; h: number; children: React.ReactNode }) => (
  <PlotSvg width={1838} height={h} viewBox={`2 ${top} 1838 ${h}`} shapeRendering="crispEdges">
    {children}
  </PlotSvg>
);

const MdiGlyphs = () => (
  <>
    <MdiButton>
      <svg width="10" height="10" viewBox="0 0 10 10"><path d="M2 8h6" stroke="#4a5a6a" strokeWidth="2" /></svg>
    </MdiButton>
    <MdiButton>
      <svg width="12" height="12" viewBox="0 0 12 12"><path d="M2.5 5.5h6v5h-6zM4.5 5V2.5h6v5H9" fill="none" stroke="#4a5a6a" /></svg>
    </MdiButton>
    <MdiButton>
      <svg width="10" height="10" viewBox="0 0 10 10"><path d="M2 2l6 6M8 2L2 8" stroke="#4a5a6a" strokeWidth="1.4" /></svg>
    </MdiButton>
  </>
);

export default function App() {
  return (
    <Page>
      <GlobalStyle />

      <TitleBar>
        <AppIcon width="18" height="24" viewBox="0 0 18 24">
          <path d="M9 1C4 4 1 9 2 15c1 4 4 7 7 8-2-3-3-6-2-10 1-3 3-5 5-7-2 4-3 7-1 11 1 2 3 3 5 3-2-3-2-7-1-10 1-4 0-7-6-9z" fill="#2f80e0" stroke="#1c58b0" strokeWidth="0.6" />
        </AppIcon>
        <TitleText>{'TradeStation 8.1 - STOX_FIB - SITO Indici - [Chart Analysis - GS:FTSEMIB  4 min  [MCEDB] SPMIB FUTURES]'}</TitleText>
        <WinButtons>
          <WinButton $w={38} $bg="linear-gradient(180deg, #7f93a8, #55697f)">
            <svg width="16" height="14" viewBox="0 0 16 14"><path d="M1 10h14" stroke="#fff" strokeWidth="3" /></svg>
          </WinButton>
          <WinButton $w={35} $bg="linear-gradient(180deg, #7f93a8, #55697f)">
            <svg width="16" height="18" viewBox="0 0 16 18"><path d="M5 3h9v12M2 6h9v10H2z" fill="none" stroke="#fff" strokeWidth="2" /><rect x="5" y="9" width="3" height="4" fill="#556" /></svg>
          </WinButton>
          <WinButton $w={65} $bg="linear-gradient(180deg, #d8765c, #c8381c 60%, #d85a30)">
            <svg width="20" height="18" viewBox="0 0 20 18"><path d="M4 2l12 14M16 2L4 16" stroke="#fff" strokeWidth="3.4" /></svg>
          </WinButton>
        </WinButtons>
      </TitleBar>

      <MenuBar>
        <MenuLogo width="19" height="18" viewBox="0 0 19 18">
          <rect width="19" height="18" fill="#10283a" />
          <path d="M1 11l3-5 2 3 3-6 2 4 3-3 3 4" stroke="#30d060" fill="none" />
          <path d="M1 15l4-2 4 2 4-2 5 2" stroke="#d03030" fill="none" />
        </MenuLogo>
        {['File', 'Edit', 'View', 'Insert', 'Format', 'Drawing', 'Window', 'Help'].map((m) => (
          <MenuItem key={m}>{m}</MenuItem>
        ))}
        <MdiButtons>
          <MdiGlyphs />
        </MdiButtons>
      </MenuBar>

      <Toolbar>
        <Grip $w={9} />
        {toolGroups.map((g) => (
          <ToolGroup key={g[0]} names={g} />
        ))}
        <Combo>
          <svg width="10" height="6" viewBox="0 0 10 6"><path d="M0 0h10L5 6z" fill="#000" /></svg>
        </Combo>
        <ComboGap $w={17}>
          <svg width="6" height="10" viewBox="0 0 6 10"><path d="M0 0l6 5-6 5z" fill="#000" /></svg>
        </ComboGap>
        <ComboGap $w={5} />
        <Tool name="chartFind" />
        <ComboGap $w={23} />
        {toolGroupsB.map((g) => (
          <ToolGroup key={g[0]} names={g} />
        ))}
        <Tool name="pointer" pressed />
        <Tool name="chartT" />
        <ToolSep />
        <Tool name="tools" />
        <ToolSep />
        <Tool name="dial" />
        <ToolSep />
        <Tool name="noteG" />
        <Grip $w={33} />
        {drawingTools.map((n) => (
          <Tool key={n} name={n} />
        ))}
        <ToolSep />
        <Tool name="curve" />
        <Tool name="down" />
        <Tool name="up" />
        <Tool name="circle" />
        <Tool name="square" />
        <ToolButton>
          <AbcLabel>abc</AbcLabel>
        </ToolButton>
      </Toolbar>

      <Chart>
        <Pane $h={469}>
          <MdiButtons $floating>
            <MdiGlyphs />
          </MdiButtons>
          <Plot>
            <Legend items={mainLegend} top={2} />
            <Plane top={89} h={469}>
              <DayLines from={106} to={555} />
              <polyline points={poly(arches)} fill="none" stroke="#006464" strokeDasharray="10 4" />
              <polyline points={poly(closes)} fill="none" stroke="#6a6aff" />
              <polyline points={poly(mainYellow)} fill="none" stroke="#ffff00" />
              <polyline points={poly(mainBlue)} fill="none" stroke="#0000ff" strokeWidth={2.2} />
              {closes.map(([x, y]) => (
                <rect key={`${x}-${y}`} x={x - 1.5} y={y - 2.5} width={3} height={5} fill="#00ffff" />
              ))}
            </Plane>
          </Plot>
          <Axis labels={mainAxis} top={89} ticks={[115, 159, 204, 250, 295, 340, 385, 430, 475, 520]} sep />
        </Pane>

        <Pane $h={216}>
          <Plot>
            <Legend items={veloLegend} top={1} />
            <Plane top={558} h={216}>
              <DayLines from={577} to={771} />
              <HLine y={670} color="#800080" w={1.4} />
              <HLine y={684} color="#008080" w={1.4} />
              <Line d={smooth(macdTeal)} color="#008080" w={1.2} />
              <Line d={smooth(macdDotted)} color="#ffff00" w={1.2} dash="2 4" />
              <Line d={smooth(macdYellow)} color="#ffff00" w={1.4} />
              <polyline points={poly(veloFast)} fill="none" stroke="#008080" />
              <Line d={smooth(veloRed)} color="#ff0000" dash="4 3" />
              <Line d={smooth(veloBlue)} color="#0000ff" />
            </Plane>
          </Plot>
          <Axis labels={veloAxis} top={558} ticks={[648, 693, 714, 736, 758]} sep />
        </Pane>

        <Pane $h={216}>
          <Plot>
            <Legend items={stocLegend} top={1} />
            <Plane top={774} h={216}>
              <DayLines from={790} to={990} />
              <HLine y={794} color="#e00000" />
              <HLine y={836} color="#808000" />
              <HLine y={879} color="#0000ff" w={2} dash="3 3" />
              <HLine y={920} color="#a89038" />
              <HLine y={963} color="#e00000" />
              <Line d={smooth(stocOrange)} color="#c06000" dash="3 3" />
              <Line d={smooth(smothCyan)} color="#00e8e8" />
              <ellipse cx={428} cy={800} rx={3.5} ry={4} fill="#00ffff" />
              <ellipse cx={678} cy={984} rx={3.5} ry={4} fill="#ff0000" />
              <ellipse cx={1138} cy={984} rx={3.5} ry={4} fill="#ff0000" />
            </Plane>
          </Plot>
          <Axis labels={stocAxis} top={774} ticks={[815, 857, 899, 942]} />
        </Pane>

        <TimeAxis>
          {timeTicks.map((x) => (
            <TimeTick key={x} $x={x} />
          ))}
          {dayLines.map((x) => (
            <TimeTick key={x} $x={x} $long />
          ))}
          {timeLabels.map(([t, x]) => (
            <TimeLabel key={t} $x={x}>
              {t}
            </TimeLabel>
          ))}
        </TimeAxis>
      </Chart>

      <HScroll>
        <svg width="6" height="10" viewBox="0 0 6 10"><path d="M6 0L0 5l6 5z" fill="#555" /></svg>
        <ScrollThumb />
        <svg width="6" height="10" viewBox="0 0 6 10"><path d="M0 0l6 5-6 5z" fill="#555" /></svg>
      </HScroll>

      <TabBar>
        <TabNav>
          {['M7 1L3 5l4 4zM2 1v8', 'M7 1L3 5l4 4z', 'M3 1l4 4-4 4z', 'M3 1l4 4-4 4zM8 1v8'].map((d) => (
            <TabNavButton key={d}>
              <svg width="10" height="10" viewBox="0 0 10 10"><path d={d} fill="#666" stroke="#666" /></svg>
            </TabNavButton>
          ))}
        </TabNav>
        {tabs.map(([name, w]) => (
          <Tab key={name} $w={w} $active={name === 'SITO Indici'}>
            <TabLabel>{name}</TabLabel>
          </Tab>
        ))}
      </TabBar>

      <StatusBar>
        <StatusHelp>For Help, press F1</StatusHelp>
        {statusCells.map(([text, w, color]) => (
          <StatusCell key={text} $w={w} $color={color}>
            {text}
          </StatusCell>
        ))}
        <StatusDot />
        <StatusCell $w={122}>25/02/2022 09:13</StatusCell>
      </StatusBar>
    </Page>
  );
}
